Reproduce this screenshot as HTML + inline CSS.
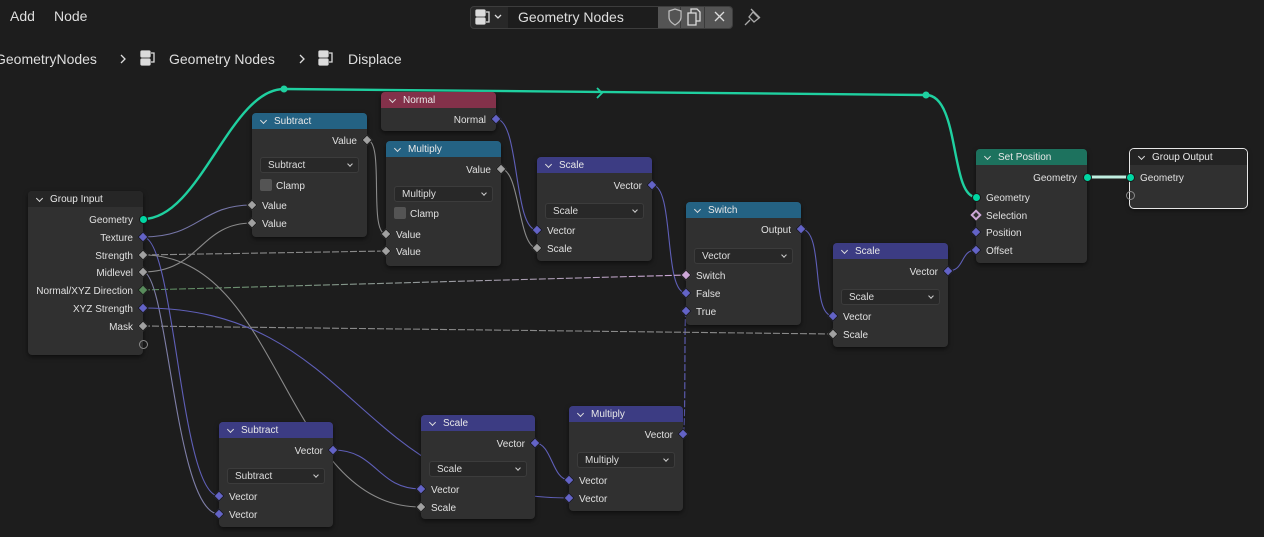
<!DOCTYPE html>
<html><head><meta charset="utf-8"><style>
*{margin:0;padding:0;box-sizing:border-box}
body{width:1264px;height:537px;background:#1d1d1d;overflow:hidden;position:relative;font-family:"Liberation Sans",sans-serif;color:#dcdcdc}
.t{position:absolute;font-size:14px;color:#dedede;white-space:nowrap}
.node{position:absolute;background:#303030;border-radius:4px;box-shadow:0 2px 5px rgba(0,0,0,.55);font-size:10px}
.hd{height:16px;border-radius:4px 4px 0 0;color:#e8e8e8;padding-left:22px;line-height:18px;position:relative;font-size:10px}
.hd:before{content:"";position:absolute;left:9px;top:5px;width:4px;height:4px;border-right:1.2px solid #ddd;border-bottom:1.2px solid #ddd;transform:rotate(45deg)}
.o,.i{position:absolute;height:14px;line-height:14px;white-space:nowrap;color:#e0e0e0;margin-top:2px}
.o{right:10px}.i{left:10px}
.dd{position:absolute;left:8px;right:8px;height:16px;background:#282828;border:1px solid #3c3c3c;border-radius:3px;padding-left:7px;line-height:15px;color:#ddd}
.dd:after{content:"";position:absolute;right:6px;top:4px;width:3px;height:3px;border-right:1px solid #ccc;border-bottom:1px solid #ccc;transform:rotate(45deg)}
.cb{position:absolute;left:8px;width:12px;height:12px;background:#545454;border-radius:2px}
.s{position:absolute;width:8px;height:8px;margin:-4px 0 0 -4px;transform:rotate(45deg);border:1px solid #1a1a1a}
.c{position:absolute;width:9px;height:9px;border-radius:50%;margin:-4.5px 0 0 -4.5px;border:1px solid #1a1a1a}
.v{background:#6363c7}.f{background:#a1a1a1}.g{background:#00d6a3}
svg{position:absolute;left:0;top:0}
</style></head><body>
<div class="t" style="left:10px;top:8px">Add</div>
<div class="t" style="left:54px;top:8px">Node</div>
<div style="position:absolute;left:470px;top:6px;width:263px;height:23px;border:1px solid #3d3d3d;border-radius:4px;background:#282828;overflow:hidden">
 <div style="position:absolute;left:37px;top:0;width:150px;height:22px;background:#1d1d1d"></div>
 <div style="position:absolute;left:187px;top:0;width:76px;height:22px;background:#545454"></div>
 <div style="position:absolute;left:209px;top:0;width:1px;height:22px;background:#3a3a3a"></div>
 <div style="position:absolute;left:233px;top:0;width:1px;height:22px;background:#3a3a3a"></div>
</div>
<svg width="1264" height="537" style="pointer-events:none">
 <g fill="none" stroke="#dcdcdc" stroke-width="1.3">
  <rect x="476" y="10" width="9" height="6" rx="1" fill="#dcdcdc"/><rect x="476" y="18" width="9" height="6" rx="1" fill="#dcdcdc"/><path d="M486 12h3v10h-3"/>
  <path d="M495 15l3 3 3-3"/>
  <path d="M669 11l6-2 6 2v6c0 4-3 6-6 8-3-2-6-4-6-8z" stroke="#bdbdbd"/>
  <path d="M688 13h8v12h-8zM691 13v-4h6l3 3v9h-4"/>
  <path d="M715 12l9 9M724 12l-9 9"/>
  <path d="M745 25l5-5M751 9l9 9M753 12l-4 5 5 5 5-4z" stroke="#aaa"/>
  <rect x="141" y="51" width="9" height="6" rx="1" fill="#dcdcdc"/><rect x="141" y="59" width="9" height="6" rx="1" fill="#dcdcdc"/><path d="M151 53h3v9h-3"/>
  <rect x="319" y="51" width="9" height="6" rx="1" fill="#dcdcdc"/><rect x="319" y="59" width="9" height="6" rx="1" fill="#dcdcdc"/><path d="M329 53h3v9h-3"/>
  <path d="M121 55l4 4-4 4M300 55l4 4-4 4"/>
 </g>
</svg>
<div class="t" style="left:518px;top:9px">Geometry Nodes</div>
<div class="t" style="left:-5px;top:51px">GeometryNodes</div>
<div class="t" style="left:169px;top:51px">Geometry Nodes</div>
<div class="t" style="left:348px;top:51px">Displace</div>

<svg width="1264" height="537">
 <defs>
  <linearGradient id="gp" x1="0" x2="1"><stop offset="0" stop-color="#598c5c"/><stop offset="1" stop-color="#cca6d6"/></linearGradient>
 </defs>
 <g fill="none" stroke-width="1.1">
  <path d="M143 237C200 237,200 205,252 205" stroke="#7676a8"/>
  <path d="M143 272C200 272,200 223,252 223" stroke="#8a8a8a"/>
  <path d="M367 140C385 140,368 234,386 234" stroke="#8a8a8a"/>
  <path d="M143 255L386 251" stroke="#8a8a8a" stroke-dasharray="7 2"/>
  <path d="M496 119C520 119,513 230,537 230" stroke="#5f5fb8"/>
  <path d="M501 169C520 169,518 248,537 248" stroke="#8a8a8a"/>
  <path d="M652 185C675 185,663 293,686 293" stroke="#5f5fb8"/>
  <path d="M143 290L686 275" stroke="url(#gp)" stroke-dasharray="7 2"/>
  <path d="M683 434C686 434,684 311,686 311" stroke="#5f5fb8" stroke-dasharray="7 2"/>
  <path d="M801 229C825 229,810 316,833 316" stroke="#5f5fb8"/>
  <path d="M143 326L833 334" stroke="#8a8a8a" stroke-dasharray="7 2"/>
  <path d="M948 271C965 271,960 250,976 250" stroke="#5f5fb8"/>
  <path d="M143 237C175 237,180 496,219 496" stroke="#5f5fb8"/>
  <path d="M143 272C168 272,175 514,219 514" stroke="#7f7fa8"/>
  <path d="M143 255C282 255,282 507,421 507" stroke="#8a8a8a"/>
  <path d="M143 308C356 308,356 498,569 498" stroke="#5f5fb8"/>
  <path d="M333 450C377 450,377 489,421 489" stroke="#5f5fb8"/>
  <path d="M535 443C552 443,552 480,569 480" stroke="#5f5fb8"/>
  <path d="M143 219C200 219,230 89,284 89L926 95C960 95,950 197,976 197" stroke="#1fd0a0" stroke-width="2.4"/>
  <path d="M597 88l5 5-5 5" stroke="#1fd0a0" stroke-width="1.8"/>
  <path d="M1087 177L1130 177" stroke="#bfeee0" stroke-width="3"/>
  <circle cx="284" cy="89" r="3.5" fill="#1fd0a0" stroke="none"/>
  <circle cx="926" cy="95" r="3.5" fill="#1fd0a0" stroke="none"/>
 </g>
</svg>

<div class="node" style="left:28px;top:191px;width:115px;height:164px">
 <div class="hd" style="background:#262626">Group Input</div>
 <div class="o" style="top:21px">Geometry</div><div class="o" style="top:39px">Texture</div>
 <div class="o" style="top:57px">Strength</div><div class="o" style="top:74px">Midlevel</div>
 <div class="o" style="top:92px">Normal/XYZ Direction</div><div class="o" style="top:110px">XYZ Strength</div>
 <div class="o" style="top:128px">Mask</div>
</div>
<div class="node" style="left:252px;top:113px;width:115px;height:124px">
 <div class="hd" style="background:#246283">Subtract</div>
 <div class="o" style="top:20px">Value</div>
 <div class="dd" style="top:44px">Subtract</div>
 <div class="cb" style="top:66px"></div><div class="i" style="top:65px;left:24px">Clamp</div>
 <div class="i" style="top:85px">Value</div><div class="i" style="top:103px">Value</div>
</div>
<div class="node" style="left:381px;top:92px;width:115px;height:39px">
 <div class="hd" style="background:#83314a">Normal</div>
 <div class="o" style="top:20px">Normal</div>
</div>
<div class="node" style="left:386px;top:141px;width:115px;height:125px">
 <div class="hd" style="background:#246283">Multiply</div>
 <div class="o" style="top:21px">Value</div>
 <div class="dd" style="top:45px">Multiply</div>
 <div class="cb" style="top:66px"></div><div class="i" style="top:65px;left:24px">Clamp</div>
 <div class="i" style="top:86px">Value</div><div class="i" style="top:103px">Value</div>
</div>
<div class="node" style="left:537px;top:157px;width:115px;height:104px">
 <div class="hd" style="background:#3c3c83">Scale</div>
 <div class="o" style="top:21px">Vector</div>
 <div class="dd" style="top:46px">Scale</div>
 <div class="i" style="top:66px">Vector</div><div class="i" style="top:84px">Scale</div>
</div>
<div class="node" style="left:686px;top:202px;width:115px;height:123px">
 <div class="hd" style="background:#246283">Switch</div>
 <div class="o" style="top:20px">Output</div>
 <div class="dd" style="top:46px">Vector</div>
 <div class="i" style="top:66px">Switch</div><div class="i" style="top:84px">False</div><div class="i" style="top:102px">True</div>
</div>
<div class="node" style="left:833px;top:243px;width:115px;height:104px">
 <div class="hd" style="background:#3c3c83">Scale</div>
 <div class="o" style="top:21px">Vector</div>
 <div class="dd" style="top:46px">Scale</div>
 <div class="i" style="top:66px">Vector</div><div class="i" style="top:84px">Scale</div>
</div>
<div class="node" style="left:976px;top:149px;width:111px;height:114px">
 <div class="hd" style="background:#1d725e">Set Position</div>
 <div class="o" style="top:21px">Geometry</div>
 <div class="i" style="top:41px">Geometry</div><div class="i" style="top:59px">Selection</div>
 <div class="i" style="top:76px">Position</div><div class="i" style="top:94px">Offset</div>
</div>
<div class="node" style="left:1130px;top:149px;width:117px;height:59px;outline:1px solid #e6e6e6;outline-offset:0">
 <div class="hd" style="background:#232323">Group Output</div>
 <div class="i" style="top:21px;left:10px">Geometry</div>
</div>
<div class="node" style="left:219px;top:422px;width:114px;height:105px">
 <div class="hd" style="background:#3c3c83">Subtract</div>
 <div class="o" style="top:21px">Vector</div>
 <div class="dd" style="top:46px">Subtract</div>
 <div class="i" style="top:67px">Vector</div><div class="i" style="top:85px">Vector</div>
</div>
<div class="node" style="left:421px;top:415px;width:114px;height:104px">
 <div class="hd" style="background:#3c3c83">Scale</div>
 <div class="o" style="top:21px">Vector</div>
 <div class="dd" style="top:46px">Scale</div>
 <div class="i" style="top:67px">Vector</div><div class="i" style="top:85px">Scale</div>
</div>
<div class="node" style="left:569px;top:406px;width:114px;height:105px">
 <div class="hd" style="background:#3c3c83">Multiply</div>
 <div class="o" style="top:21px">Vector</div>
 <div class="dd" style="top:46px">Multiply</div>
 <div class="i" style="top:67px">Vector</div><div class="i" style="top:85px">Vector</div>
</div>

<div class="c g" style="left:143px;top:219px"></div>
<div class="s v" style="left:143px;top:237px"></div>
<div class="s f" style="left:143px;top:255px"></div>
<div class="s f" style="left:143px;top:272px"></div>
<div class="s" style="left:143px;top:290px;background:#598c5c"></div>
<div class="s v" style="left:143px;top:308px"></div>
<div class="s f" style="left:143px;top:326px"></div>
<div class="c" style="left:143px;top:344px;border:1.3px solid #8a8a8a;background:transparent"></div>
<div class="s f" style="left:367px;top:140px"></div>
<div class="s f" style="left:252px;top:205px"></div>
<div class="s f" style="left:252px;top:223px"></div>
<div class="s v" style="left:496px;top:119px"></div>
<div class="s f" style="left:501px;top:169px"></div>
<div class="s f" style="left:386px;top:234px"></div>
<div class="s f" style="left:386px;top:251px"></div>
<div class="s v" style="left:652px;top:185px"></div>
<div class="s v" style="left:537px;top:230px"></div>
<div class="s f" style="left:537px;top:248px"></div>
<div class="s v" style="left:801px;top:229px"></div>
<div class="s" style="left:686px;top:275px;background:#cca6d6"></div>
<div class="s v" style="left:686px;top:293px"></div>
<div class="s v" style="left:686px;top:311px"></div>
<div class="s v" style="left:948px;top:271px"></div>
<div class="s v" style="left:833px;top:316px"></div>
<div class="s f" style="left:833px;top:334px"></div>
<div class="c g" style="left:1087px;top:177px"></div>
<div class="c g" style="left:976px;top:197px"></div>
<div class="s" style="left:976px;top:215px;background:#303030;border:2px solid #cca6d6"></div>
<div class="s v" style="left:976px;top:232px"></div>
<div class="s v" style="left:976px;top:250px"></div>
<div class="c g" style="left:1130px;top:177px"></div>
<div class="c" style="left:1130px;top:195px;border:1.3px solid #8a8a8a;background:transparent"></div>
<div class="s v" style="left:333px;top:450px"></div>
<div class="s v" style="left:219px;top:496px"></div>
<div class="s v" style="left:219px;top:514px"></div>
<div class="s v" style="left:535px;top:443px"></div>
<div class="s v" style="left:421px;top:489px"></div>
<div class="s f" style="left:421px;top:507px"></div>
<div class="s v" style="left:683px;top:434px"></div>
<div class="s v" style="left:569px;top:480px"></div>
<div class="s v" style="left:569px;top:498px"></div>
</body></html>
